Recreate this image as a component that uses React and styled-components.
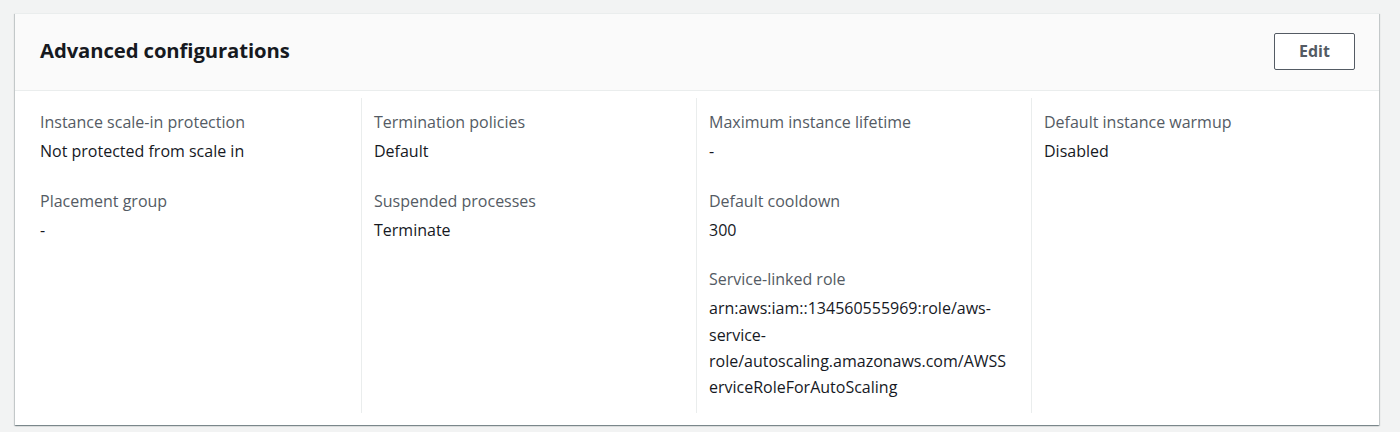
import React from 'react';
import styled, {createGlobalStyle} from 'styled-components';

const GlobalStyle = createGlobalStyle`
  html, body {
    margin: 0;
    padding: 0;
    background: #f2f3f3;
  }
  body {
    font-family: 'Open Sans', 'Noto Sans', Arial, sans-serif;
    color: #16191f;
    -webkit-font-smoothing: antialiased;
  }
`;

const Page = styled.div`
  padding: 13px 21px 7px 15px;
`;

const Card = styled.section`
  background: #fff;
  border-top: 1px solid #eaeded;
  box-shadow: 0 1px 1px 0 rgba(0, 28, 36, 0.3),
    1px 1px 1px 0 rgba(0, 28, 36, 0.15),
    -1px 1px 1px 0 rgba(0, 28, 36, 0.15);
`;

const Header = styled.header`
  display: flex;
  justify-content: space-between;
  align-items: center;
  height: 76px;
  padding: 0 24px 0 25px;
  background: #fafafa;
  border-bottom: 1px solid #eaeded;
`;

const Title = styled.h2`
  margin: -4px 0 0;
  font-size: 20.3px;
  font-weight: 700;
  letter-spacing: -0.1px;
  color: #16191f;
`;

const Button = styled.button`
  width: 81px;
  height: 37px;
  margin-top: -2px;
  background: #fff;
  border: 1px solid #545b64;
  border-radius: 2px;
  font-family: inherit;
  font-size: 16px;
  font-weight: 700;
  color: #545b64;
  cursor: pointer;
`;

const Body = styled.div`
  display: grid;
  grid-template-columns: repeat(4, 335px);
  padding: 7px 12px 12px 11px;
`;

const Column = styled.div`
  padding: 11px 13px 12px ${p => (p.$first ? '14px' : '12px')};
  border-left: ${p => (p.$first ? 'none' : '1px solid #eaeded')};
  display: flex;
  flex-direction: column;
  gap: 23px;
`;

const Field = styled.div`
  display: flex;
  flex-direction: column;
  gap: 3px;
  font-size: 16px;
  line-height: 26.3px;
`;

const Label = styled.div`
  color: #545b64;
`;

const Value = styled.div`
  color: #16191f;
  overflow-wrap: break-word;
  padding-right: 5px;
`;

const columns = [
  [
    ['Instance scale-in protection', 'Not protected from scale in'],
    ['Placement group', '-'],
  ],
  [
    ['Termination policies', 'Default'],
    ['Suspended processes', 'Terminate'],
  ],
  [
    ['Maximum instance lifetime', '-'],
    ['Default cooldown', '300'],
    [
      'Service-linked role',
      'arn:aws:iam::134560555969:role/aws-service-role/autoscaling.amazonaws.com/AWSServiceRoleForAutoScaling',
    ],
  ],
  [['Default instance warmup', 'Disabled']],
];

const App = () => (
  <Page>
    <GlobalStyle />
    <Card>
      <Header>
        <Title>Advanced configurations</Title>
        <Button>Edit</Button>
      </Header>
      <Body>
        {columns.map((fields, i) => (
          <Column key={i} $first={i === 0}>
            {fields.map(([label, value]) => (
              <Field key={label}>
                <Label>{label}</Label>
                <Value>{value}</Value>
              </Field>
            ))}
          </Column>
        ))}
      </Body>
    </Card>
  </Page>
);

export default App;
